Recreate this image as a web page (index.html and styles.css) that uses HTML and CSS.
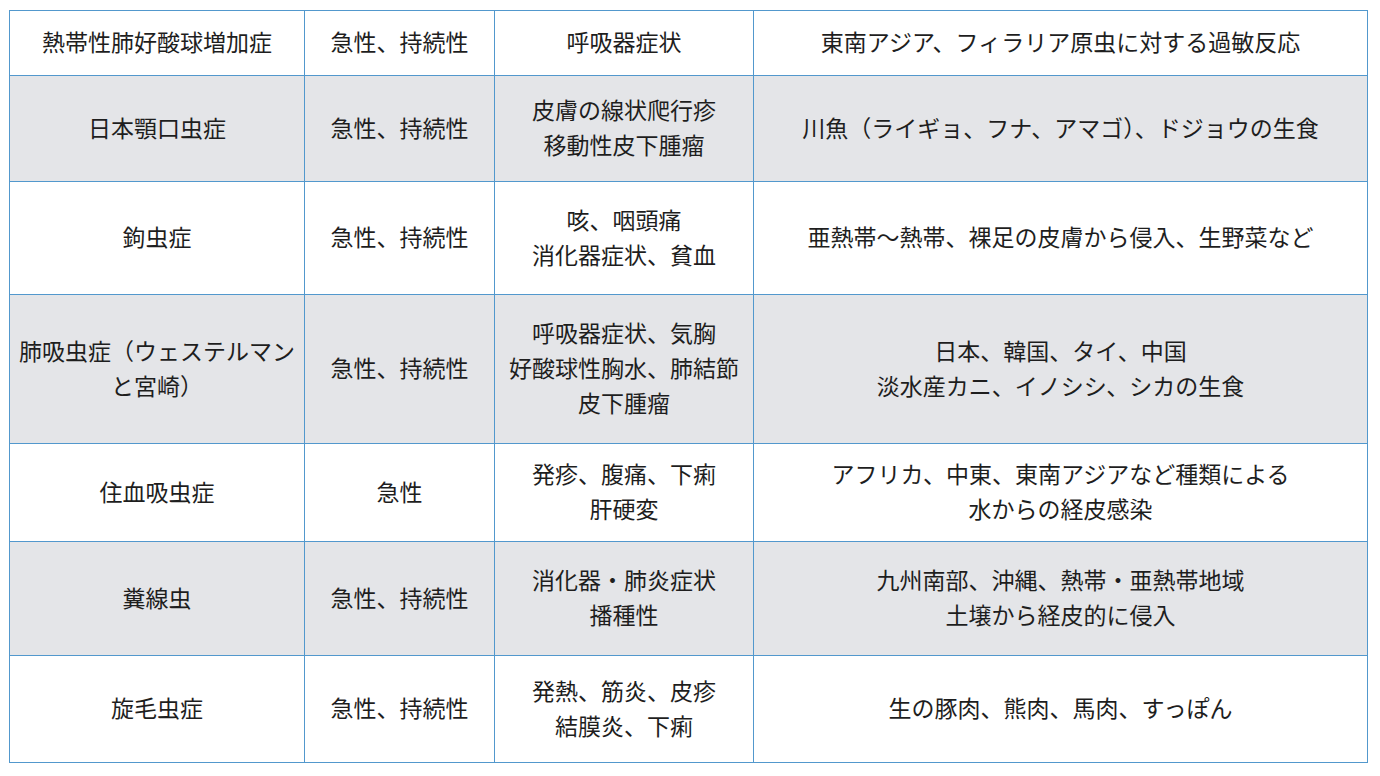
FILE: index.html
```html
<!DOCTYPE html>
<html lang="ja">
<head>
<meta charset="utf-8">
<title>寄生虫症</title>
<link rel="stylesheet" href="styles.css">
</head>
<body>
<table class="tbl">
  <colgroup>
    <col class="c1"><col class="c2"><col class="c3"><col class="c4">
  </colgroup>
  <tbody>
    <tr class="r1 white">
      <td>熱帯性肺好酸球増加症</td>
      <td>急性、持続性</td>
      <td>呼吸器症状</td>
      <td>東南アジア、フィラリア原虫に対する過敏反応</td>
    </tr>
    <tr class="r2 grey">
      <td>日本顎口虫症</td>
      <td>急性、持続性</td>
      <td>皮膚の線状爬行疹<br>移動性皮下腫瘤</td>
      <td>川魚（ライギョ、フナ、アマゴ）、ドジョウの生食</td>
    </tr>
    <tr class="r3 white">
      <td>鉤虫症</td>
      <td>急性、持続性</td>
      <td>咳、咽頭痛<br>消化器症状、貧血</td>
      <td>亜熱帯〜熱帯、裸足の皮膚から侵入、生野菜など</td>
    </tr>
    <tr class="r4 grey">
      <td>肺吸虫症（ウェステルマン<br>と宮崎）</td>
      <td>急性、持続性</td>
      <td>呼吸器症状、気胸<br>好酸球性胸水、肺結節<br>皮下腫瘤</td>
      <td>日本、韓国、タイ、中国<br>淡水産カニ、イノシシ、シカの生食</td>
    </tr>
    <tr class="r5 white">
      <td>住血吸虫症</td>
      <td>急性</td>
      <td>発疹、腹痛、下痢<br>肝硬変</td>
      <td>アフリカ、中東、東南アジアなど種類による<br>水からの経皮感染</td>
    </tr>
    <tr class="r6 grey">
      <td>糞線虫</td>
      <td>急性、持続性</td>
      <td>消化器・肺炎症状<br>播種性</td>
      <td>九州南部、沖縄、熱帯・亜熱帯地域<br>土壌から経皮的に侵入</td>
    </tr>
    <tr class="r7 white">
      <td>旋毛虫症</td>
      <td>急性、持続性</td>
      <td>発熱、筋炎、皮疹<br>結膜炎、下痢</td>
      <td>生の豚肉、熊肉、馬肉、すっぽん</td>
    </tr>
  </tbody>
</table>
</body>
</html>
```
FILE: styles.css
```css
html, body {
  margin: 0;
  padding: 0;
  background: #ffffff;
}
body {
  padding: 10px 0 0 9px;
  font-family: "Noto Sans CJK JP", "Noto Sans", sans-serif;
  color: #1e1e1e;
}
.tbl {
  border-collapse: collapse;
  table-layout: fixed;
  width: 1358px;
  font-size: 23px;
  line-height: 35px;
}
.c1 { width: 295px; }
.c2 { width: 190px; }
.c3 { width: 259px; }
.c4 { width: 614px; }
.tbl td {
  border: 1px solid #5298cd;
  text-align: center;
  vertical-align: middle;
  padding: 0 0 3px 0;
  white-space: nowrap;
}
.white { background: #ffffff; }
.grey { background: #e4e5e8; }
.r1 { height: 65px; }
.r2 { height: 106px; }
.r3 { height: 113px; }
.r4 { height: 149px; }
.r5 { height: 98px; }
.r6 { height: 114px; }
.r7 { height: 107px; }
```
